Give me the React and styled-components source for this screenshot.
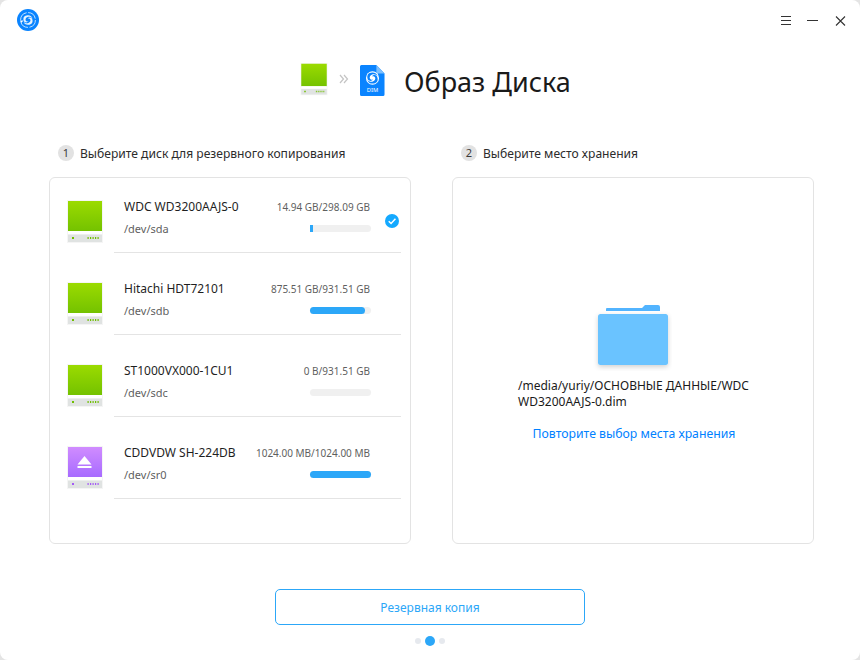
import React from "react";
import styled, { createGlobalStyle } from "styled-components";

const GlobalStyle = createGlobalStyle`
  html, body {
    margin: 0;
    padding: 0;
    background: #e4e4e4;
  }
  * { box-sizing: border-box; }
`;

const Win = styled.div`
  width: 860px;
  height: 660px;
  background: #fff;
  border-radius: 8px;
  overflow: hidden;
  display: flex;
  flex-direction: column;
  font-family: "Noto Sans", sans-serif;
  color: #1f1f1f;
`;

const TitleBar = styled.div`
  height: 40px;
  padding: 9px 12px 0 17px;
  display: flex;
  justify-content: space-between;
  align-items: flex-start;
`;

const WinButtons = styled.div`
  display: flex;
  align-items: center;
  gap: 13px;
  padding-top: 6px;
`;

const Header = styled.div`
  height: 97px;
  padding: 23px 0 0 300px;
  display: flex;
  align-items: flex-start;
`;

const Chevrons = styled.span`
  width: 32px;
  height: 32px;
  display: flex;
  justify-content: center;
  align-items: center;
`;

const DimWrap = styled.span`
  display: block;
  padding-top: 2px;
`;

const Title = styled.h1`
  margin: 0 0 0 19px;
  font-size: 27px;
  line-height: 37px;
  font-weight: 400;
  color: #1a1a1a;
`;

const Columns = styled.div`
  display: grid;
  grid-template-columns: 362px 362px;
  column-gap: 41px;
  padding-left: 49px;
`;

const Column = styled.section`
  display: flex;
  flex-direction: column;
`;

const Step = styled.div`
  height: 40px;
  padding: 8px 0 0 9px;
  display: flex;
  align-items: flex-start;
  gap: 6px;
  font-size: 12.1px;
  line-height: 17px;
  color: #2c2c2c;
`;

const StepNum = styled.span`
  width: 16px;
  height: 16px;
  border-radius: 50%;
  background: #e2e2e2;
  font-size: 11px;
  line-height: 16px;
  text-align: center;
  color: #3a3a3a;
`;

const Panel = styled.div`
  height: 367px;
  border: 1px solid #e3e3e3;
  border-radius: 6px;
  display: flex;
  flex-direction: column;
`;

const DiskRow = styled.div`
  height: 82px;
  flex-shrink: 0;
  padding-left: 17px;
  display: flex;
`;

const DiskIconWrap = styled.div`
  width: 47px;
  padding-top: 22px;
  flex-shrink: 0;
`;

const DiskBody = styled.div`
  width: 287px;
  margin-top: -7px;
  height: 82px;
  padding: 26px 30px 0 10px;
  border-bottom: 1px solid #e4e4e4;
  position: relative;
`;

const TopLine = styled.div`
  display: flex;
  justify-content: space-between;
  align-items: center;
  height: 18px;
`;

const DiskName = styled.span`
  font-size: 12px;
  color: #1f1f1f;
`;

const DiskSize = styled.span`
  font-size: 10px;
  color: #5f5f5f;
  padding: 1px 1px 0 0;
`;

const BottomLine = styled.div`
  display: flex;
  justify-content: space-between;
  align-items: center;
  margin-top: 4px;
  height: 18px;
`;

const DiskPath = styled.span`
  font-size: 11px;
  color: #5f5f5f;
`;

const Track = styled.div`
  width: 61px;
  height: 7px;
  border-radius: 4px;
  background: #f0f0f0;
`;

const Fill = styled.div`
  height: 100%;
  background: #2ca7f8;
  border-radius: ${({ $full }) => ($full ? "4px" : "0")};
`;

const Check = styled.svg`
  position: absolute;
  right: 2px;
  top: 43px;
`;

const TargetPanel = styled(Panel)`
  align-items: center;
  padding-top: 121px;
`;

const FolderWrap = styled.div`
  margin-left: -4px;
`;

const Path = styled.div`
  width: 232px;
  margin: 2px 0 0 2px;
  font-size: 12px;
  line-height: 16px;
  color: #1a1a1a;
`;

const Relink = styled.a`
  margin: 16px 0 0 2px;
  font-size: 12.25px;
  line-height: 16px;
  color: #0081ff;
`;

const Footer = styled.div`
  display: flex;
  flex-direction: column;
  align-items: center;
  padding: 45px 0 0 0;
`;

const BackupBtn = styled.button`
  width: 310px;
  height: 36px;
  background: #fff;
  border: 1px solid #2ca7f8;
  border-radius: 5px;
  font-family: inherit;
  font-size: 12px;
  color: #2ca7f8;
`;

const Dots = styled.div`
  display: flex;
  align-items: center;
  gap: 4px;
  margin-top: 11px;
`;

const Dot = styled.span`
  width: ${({ $active }) => ($active ? "10px" : "6px")};
  height: ${({ $active }) => ($active ? "10px" : "6px")};
  border-radius: 50%;
  background: ${({ $active }) => ($active ? "#2ca7f8" : "#e6e9ee")};
`;

const Swirl = ({ color, bg }) => (
  <g fill={color}>
    <path d="M0-5.600a5.600 5.600 0 0 1 5.400 4.200C4.300-3.500 1.800-4.300-.4-3.500c-2 .7-3 2.600-2.300 4 .5 1 1.900 1.500 3.300 1.100-1.200 1.500-3.500 1.700-5 .5C-6-.2-5.800-3.800-3-5a6 6 0 0 1 3-.6z" />
    <path d="M0 5.600a5.600 5.600 0 0 1-5.400-4.200C-4.300 3.500-1.800 4.300.4 3.500c2-.7 3-2.600 2.300-4C2.200-1.500.8-2-.6-1.600.6-3.100 2.900-3.300 4.400-2.100 6 .2 5.800 3.800 3 5a6 6 0 0 1-3 .6z" />
    <circle r="1.100" fill={bg} />
  </g>
);

const AppLogo = () => (
  <svg width="22" height="22" viewBox="0 0 22 22">
    <circle cx="11" cy="11" r="11" fill="#0a84ff" />
    <circle cx="11" cy="11" r="7.400" fill="none" stroke="#bfe0ff" strokeWidth="1" strokeDasharray="10 1.600" />
    <path d="M2.800 11.500l1.800 2.200 1.800-2.200z" fill="#fff" />
    <g transform="translate(11 11) scale(.85)">
      <Swirl color="#e8f4ff" bg="#0a84ff" />
    </g>
  </svg>
);

const DriveIcon = ({ purple, small }) => {
  const id = purple ? "gradP" : "gradG";
  const from = purple ? "#d08cff" : "#9bdb00";
  const to = purple ? "#a76bff" : "#74c200";
  const led = purple ? "#a45cf5" : "#6fbf00";
  return (
    <svg width={small ? 28 : 36} height={small ? 33 : 44} viewBox="0 0 36 44">
      <defs>
        <linearGradient id={id} x1="0" y1="0" x2="0" y2="1">
          <stop offset="0" stopColor={from} />
          <stop offset="1" stopColor={to} />
        </linearGradient>
      </defs>
      <rect x="0" y="0" width="36" height="43" fill="#f5f5f5" />
      <rect x="1" y="1" width="34" height="30" fill={`url(#${id})`} />
      <rect x="1" y="31" width="34" height="3.500" fill="#fff" />
      <rect x="1" y="34.500" width="34" height="7.500" fill="#e0e3e2" />
      <rect x="5" y="37" width="2" height="2" fill={led} />
      {[20.500, 23, 25.500, 28, 30.500].map((x) => (
        <rect key={x} x={x} y="37" width="1.200" height="2" fill={led} />
      ))}
      {purple && (
        <g fill="#fff">
          <path d="M17.500 10 24.500 18.500H10.500z" />
          <rect x="10.500" y="20" width="14" height="2" />
        </g>
      )}
    </svg>
  );
};

const DimIcon = () => (
  <svg width="25" height="31" viewBox="0 0 26 31" preserveAspectRatio="none">
    <path d="M1.500 0H17l8.500 8.500V29.500a1.500 1.500 0 0 1-1.500 1.500H1.500A1.500 1.500 0 0 1 0 29.500V1.500A1.500 1.500 0 0 1 1.500 0z" fill="#0a84ff" />
    <path d="M17 0l8.500 8.500H18.500A1.500 1.500 0 0 1 17 7z" fill="#7cc0ff" />
    <circle cx="13" cy="13" r="6.800" fill="#fff" />
    <g transform="translate(13 13)">
      <Swirl color="#0a84ff" bg="#fff" />
    </g>
    <text x="13" y="27.500" fontSize="6" fontWeight="400" textAnchor="middle" fill="#fff" fontFamily="Noto Sans, sans-serif">DIM</text>
  </svg>
);

const FolderIcon = () => (
  <svg width="82" height="72" viewBox="0 0 82 72">
    <defs>
      <filter id="folderShadow" x="-20%" y="-20%" width="140%" height="140%">
        <feDropShadow dx="0" dy="2" stdDeviation="2.500" floodColor="#000" floodOpacity="0.180" />
      </filter>
    </defs>
    <path d="M16 10a1 1 0 0 1 1-1h35l3-3h13a2 2 0 0 1 2 2V12H16z" fill="#52b4ff" />
    <rect x="8" y="15" width="70" height="51" rx="2.500" fill="#6ac3ff" filter="url(#folderShadow)" />
  </svg>
);

const disks = [
  { name: "WDC WD3200AAJS-0", size: "14.94 GB/298.09 GB", path: "/dev/sda", pct: 5, selected: true },
  { name: "Hitachi HDT72101", size: "875.51 GB/931.51 GB", path: "/dev/sdb", pct: 90 },
  { name: "ST1000VX000-1CU1", size: "0 B/931.51 GB", path: "/dev/sdc", pct: 0 },
  { name: "CDDVDW SH-224DB", size: "1024.00 MB/1024.00 MB", path: "/dev/sr0", pct: 100, purple: true },
];

const App = () => (
  <>
    <GlobalStyle />
    <Win>
      <TitleBar>
        <AppLogo />
        <WinButtons>
          <svg width="12" height="12" viewBox="0 0 12 12" stroke="#333" strokeWidth="1" fill="none">
            <path d="M1 1.500h10M1 5.500h10M1 9.500h10" />
          </svg>
          <svg width="16" height="12" viewBox="0 0 16 12" stroke="#333" strokeWidth="1" fill="none">
            <path d="M2 5.500h11" />
          </svg>
          <svg width="14" height="12" viewBox="0 0 14 12" stroke="#333" strokeWidth="1.100" fill="none">
            <path d="M2 1.500l9 9M11 1.500l-9 9" />
          </svg>
        </WinButtons>
      </TitleBar>
      <Header>
        <DriveIcon small />
        <Chevrons>
          <svg width="10" height="10" viewBox="0 0 10 10" fill="none" stroke="#c4c4c4" strokeWidth="1.200">
            <path d="M1 1l3.500 4L1 9M5 1l3.500 4L5 9" />
          </svg>
        </Chevrons>
        <DimWrap>
          <DimIcon />
        </DimWrap>
        <Title>Образ Диска</Title>
      </Header>
      <Columns>
        <Column>
          <Step>
            <StepNum>1</StepNum>
            Выберите диск для резервного копирования
          </Step>
          <Panel>
            {disks.map((d) => (
              <DiskRow key={d.path}>
                <DiskIconWrap>
                  <DriveIcon purple={d.purple} />
                </DiskIconWrap>
                <DiskBody>
                  <TopLine>
                    <DiskName>{d.name}</DiskName>
                    <DiskSize>{d.size}</DiskSize>
                  </TopLine>
                  <BottomLine>
                    <DiskPath>{d.path}</DiskPath>
                    <Track>
                      <Fill $full={d.pct > 50} style={{ width: `${d.pct}%` }} />
                    </Track>
                  </BottomLine>
                  {d.selected && (
                    <Check width="14" height="14" viewBox="0 0 15 15">
                      <circle cx="7.500" cy="7.500" r="7.500" fill="#14a9ff" />
                      <path d="M4 7.800l2.500 2.400L11.200 5.200" fill="none" stroke="#fff" strokeWidth="1.600" />
                    </Check>
                  )}
                </DiskBody>
              </DiskRow>
            ))}
          </Panel>
        </Column>
        <Column>
          <Step>
            <StepNum>2</StepNum>
            Выберите место хранения
          </Step>
          <TargetPanel>
            <FolderWrap>
              <FolderIcon />
            </FolderWrap>
            <Path>/media/yuriy/ОСНОВНЫЕ ДАННЫЕ/WDC WD3200AAJS-0.dim</Path>
            <Relink>Повторите выбор места хранения</Relink>
          </TargetPanel>
        </Column>
      </Columns>
      <Footer>
        <BackupBtn>Резервная копия</BackupBtn>
        <Dots>
          <Dot />
          <Dot $active />
          <Dot />
        </Dots>
      </Footer>
    </Win>
  </>
);

export default App;
